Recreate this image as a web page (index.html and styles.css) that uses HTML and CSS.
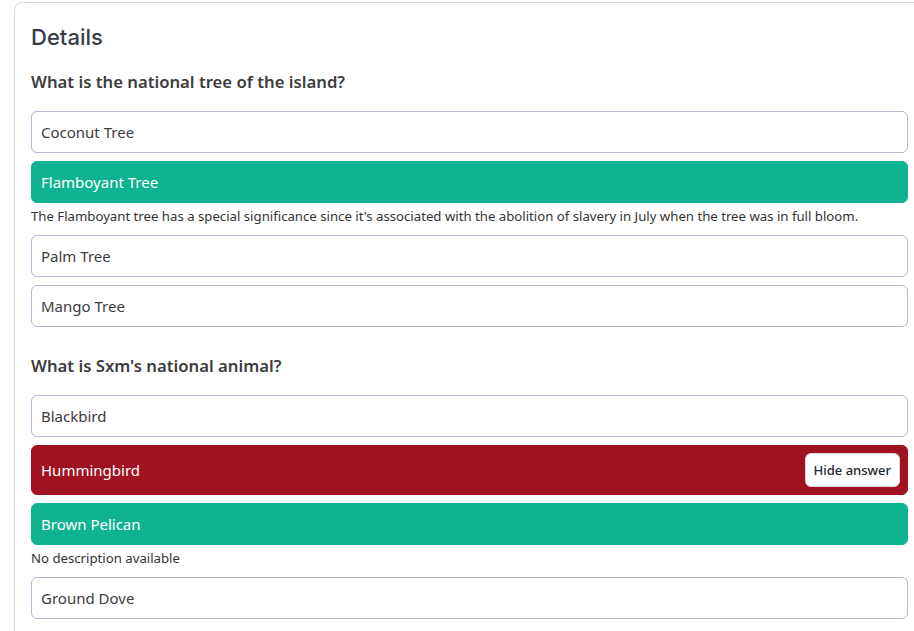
FILE: index.html
```html
<!DOCTYPE html>
<html lang="en">
<head>
<meta charset="utf-8">
<title>Details</title>
<link rel="stylesheet" href="styles.css">
</head>
<body>
<div class="page">
  <section class="card">
    <h2 class="card-title">Details</h2>

    <div class="question">
      <h3 class="question-title">What is the national tree of the island?</h3>
      <div class="answers">
        <div class="answer">
          <div class="option">Coconut Tree</div>
        </div>
        <div class="answer">
          <div class="option option-correct">Flamboyant Tree</div>
          <p class="description">The Flamboyant tree has a special significance since it's associated with the abolition of slavery in July when the tree was in full bloom.</p>
        </div>
        <div class="answer">
          <div class="option">Palm Tree</div>
        </div>
        <div class="answer">
          <div class="option">Mango Tree</div>
        </div>
      </div>
    </div>

    <div class="question">
      <h3 class="question-title">What is Sxm's national animal?</h3>
      <div class="answers">
        <div class="answer">
          <div class="option">Blackbird</div>
        </div>
        <div class="answer">
          <div class="option option-wrong option-action">
            <span>Hummingbird</span>
            <button class="hide-btn" type="button">Hide answer</button>
          </div>
        </div>
        <div class="answer">
          <div class="option option-correct">Brown Pelican</div>
          <p class="description">No description available</p>
        </div>
        <div class="answer">
          <div class="option">Ground Dove</div>
        </div>
      </div>
    </div>
  </section>
</div>
</body>
</html>
```

FILE: styles.css
```css
html, body {
  margin: 0;
  padding: 0;
  background: #ffffff;
  overflow: hidden;
}

body {
  font-family: "Noto Sans", "Open Sans", "Liberation Sans", sans-serif;
  color: #3b3b3b;
}

.page {
  padding: 2px 0 0 14px;
}

.card {
  width: 911px;
  box-sizing: border-box;
  border: 1px solid #d6d3e6;
  border-radius: 8px;
  padding: 19px 16px 40px 16px;
  background: #fff;
}

.card-title {
  margin: 0;
  font-family: "Inter", "Noto Sans", sans-serif;
  font-size: 22px;
  line-height: 30px;
  font-weight: 500;
  color: #363c45;
}

.question {
  margin-top: 18px;
}

.question + .question {
  margin-top: 27px;
}

.question-title {
  margin: 0 0 17px 0;
  font-size: 16.7px;
  line-height: 24px;
  font-weight: 600;
  color: #3d3d3d;
}

.answers {
  display: flex;
  flex-direction: column;
  gap: 8px;
}

.option {
  box-sizing: border-box;
  border: 1px solid #b9b4d0;
  border-radius: 6px;
  padding: 9px 9px;
  font-size: 15px;
  line-height: 22px;
  color: #3d3d3d;
  background: #fff;
}

.option-correct {
  background: #0fb38f;
  border-color: #0fb38f;
  color: #ffffff;
}

.option-wrong {
  background: #a0121f;
  border-color: #a0121f;
  color: #ffffff;
}

.option-action {
  display: flex;
  align-items: center;
  justify-content: space-between;
  padding: 7px 7px 7px 9px;
}

.hide-btn {
  height: 34px;
  padding: 0 8px;
  border: 1px solid #d8d8d8;
  border-radius: 6px;
  background: #ffffff;
  font-family: "Noto Sans", "Open Sans", sans-serif;
  font-size: 13px;
  font-weight: 500;
  color: #222831;
  cursor: pointer;
}

.description {
  margin: 3px 0 0 0;
  font-size: 13.2px;
  line-height: 21px;
  color: #333;
}
```
